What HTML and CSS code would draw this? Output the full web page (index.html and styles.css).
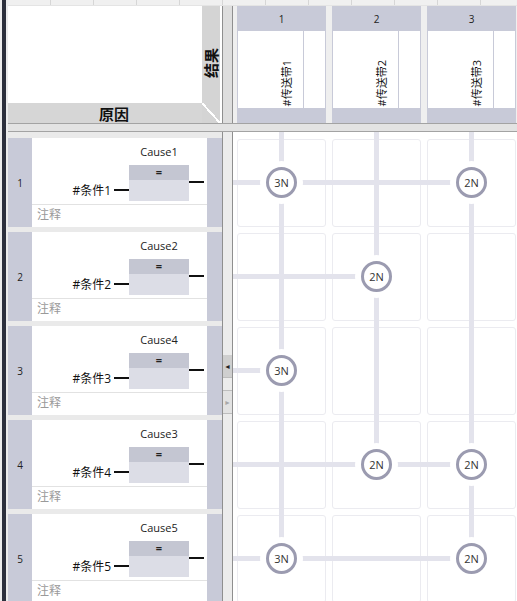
FILE: index.html
```html
<!DOCTYPE html>
<html lang="zh">
<head>
    <meta charset="UTF-8">
    <meta name="viewport" content="width=device-width, initial-scale=1.0">
    <title>因果矩阵</title>
    <link rel="stylesheet" href="styles.css">
</head>
<body>
    <div class="edge"></div>
    <div class="main">
        <div class="tabs">
            <span></span><span></span><span></span><span></span><span></span><span></span>
            <span></span><span></span><span></span><span></span><span></span><span></span>
        </div>

        <div class="corner">
            <div class="blank"></div>
            <div class="cause-title">原因</div>
            <div class="effect-title"><span>结果</span></div>
        </div>
        <div class="vsplit"></div>
        <div class="effects">
            <div class="effect">
                <div class="num">1</div>
                <div class="name"><div class="label"><span>#传送带1</span></div><i></i></div>
                <div class="foot"></div>
            </div>
            <div class="effect">
                <div class="num">2</div>
                <div class="name"><div class="label"><span>#传送带2</span></div><i></i></div>
                <div class="foot"></div>
            </div>
            <div class="effect">
                <div class="num">3</div>
                <div class="name"><div class="label"><span>#传送带3</span></div><i></i></div>
                <div class="foot"></div>
            </div>
        </div>

        <div class="hsplit"></div>

        <div class="causes">
            <div class="cause">
                <div class="num">1</div>
                <div class="body">
                    <div class="logic">
                        <div class="inp"><span>#条件1</span><b></b></div>
                        <div class="blk"><div class="tag">Cause1</div><div class="box"><div class="op">=</div><div class="pin"></div></div></div>
                        <b class="out"></b>
                    </div>
                    <div class="note">注释</div>
                </div>
                <div class="side"></div>
            </div>
            <div class="cause">
                <div class="num">2</div>
                <div class="body">
                    <div class="logic">
                        <div class="inp"><span>#条件2</span><b></b></div>
                        <div class="blk"><div class="tag">Cause2</div><div class="box"><div class="op">=</div><div class="pin"></div></div></div>
                        <b class="out"></b>
                    </div>
                    <div class="note">注释</div>
                </div>
                <div class="side"></div>
            </div>
            <div class="cause">
                <div class="num">3</div>
                <div class="body">
                    <div class="logic">
                        <div class="inp"><span>#条件3</span><b></b></div>
                        <div class="blk"><div class="tag">Cause4</div><div class="box"><div class="op">=</div><div class="pin"></div></div></div>
                        <b class="out"></b>
                    </div>
                    <div class="note">注释</div>
                </div>
                <div class="side"></div>
            </div>
            <div class="cause">
                <div class="num">4</div>
                <div class="body">
                    <div class="logic">
                        <div class="inp"><span>#条件4</span><b></b></div>
                        <div class="blk"><div class="tag">Cause3</div><div class="box"><div class="op">=</div><div class="pin"></div></div></div>
                        <b class="out"></b>
                    </div>
                    <div class="note">注释</div>
                </div>
                <div class="side"></div>
            </div>
            <div class="cause">
                <div class="num">5</div>
                <div class="body">
                    <div class="logic">
                        <div class="inp"><span>#条件5</span><b></b></div>
                        <div class="blk"><div class="tag">Cause5</div><div class="box"><div class="op">=</div><div class="pin"></div></div></div>
                        <b class="out"></b>
                    </div>
                    <div class="note">注释</div>
                </div>
                <div class="side"></div>
            </div>
        </div>

        <div class="vsplit low">
            <div class="arr">&#9668;</div>
            <div class="arr dim">&#9658;</div>
        </div>

        <div class="matrix">
            <div class="cells">
                <div class="cell"></div><div class="cell"></div><div class="cell"></div>
                <div class="cell"></div><div class="cell"></div><div class="cell"></div>
                <div class="cell"></div><div class="cell"></div><div class="cell"></div>
                <div class="cell"></div><div class="cell"></div><div class="cell"></div>
                <div class="cell"></div><div class="cell"></div><div class="cell"></div>
            </div>
            <svg class="wires" width="284" height="469" viewBox="0 0 284 469">
                <g class="wire">
                    <line x1="48.5" y1="0" x2="48.5" y2="426.5"/>
                    <line x1="143.5" y1="0" x2="143.5" y2="332.5"/>
                    <line x1="238.5" y1="0" x2="238.5" y2="426.5"/>
                    <line x1="0" y1="50.5" x2="238.5" y2="50.5"/>
                    <line x1="0" y1="144.5" x2="143.5" y2="144.5"/>
                    <line x1="0" y1="238.5" x2="48.5" y2="238.5"/>
                    <line x1="0" y1="332.5" x2="238.5" y2="332.5"/>
                    <line x1="0" y1="426.5" x2="238.5" y2="426.5"/>
                </g>
                <g class="node" transform="translate(48.5 50.5)"><circle class="halo" r="21.5"/><circle class="ring" r="14"/><text>3N</text></g>
                <g class="node" transform="translate(238.5 50.5)"><circle class="halo" r="21.5"/><circle class="ring" r="14"/><text>2N</text></g>
                <g class="node" transform="translate(143.5 144.5)"><circle class="halo" r="21.5"/><circle class="ring" r="14"/><text>2N</text></g>
                <g class="node" transform="translate(48.5 238.5)"><circle class="halo" r="21.5"/><circle class="ring" r="14"/><text>3N</text></g>
                <g class="node" transform="translate(143.5 332.5)"><circle class="halo" r="21.5"/><circle class="ring" r="14"/><text>2N</text></g>
                <g class="node" transform="translate(238.5 332.5)"><circle class="halo" r="21.5"/><circle class="ring" r="14"/><text>2N</text></g>
                <g class="node" transform="translate(48.5 426.5)"><circle class="halo" r="21.5"/><circle class="ring" r="14"/><text>3N</text></g>
                <g class="node" transform="translate(238.5 426.5)"><circle class="halo" r="21.5"/><circle class="ring" r="14"/><text>2N</text></g>
            </svg>
        </div>
    </div>
</body>
</html>
```

FILE: styles.css
```css
html, body {
    margin: 0;
    height: 100%;
}
body {
    display: flex;
    overflow: hidden;
    background-color: #ececec;
    font-family: "Open Sans", "Noto Sans CJK SC", sans-serif;
    color: #222;
}
.edge {
    flex: none;
    width: 4px;
    margin: 0 2px;
    background-color: #2c2f3c;
}
.main {
    display: grid;
    grid-template-columns: 214px 11px 284px;
    grid-template-rows: 6px 117px 9px 469px;
}

/* top strip */
.tabs {
    grid-column: 1 / -1;
    display: flex;
    overflow: hidden;
    background-color: #e4e4e4;
}
.tabs span {
    flex: none;
    width: 42px;
    margin-bottom: 1px;
    border-right: 1px solid #d6d6d6;
    background-color: #f0f0f0;
}

/* corner header */
.corner {
    display: grid;
    grid-template-columns: 194px 18px 2px;
    grid-template-rows: 97px 20px;
    background-color: #fff;
}
.cause-title {
    grid-row: 2;
    grid-column: 1 / 3;
    display: flex;
    align-items: center;
    justify-content: center;
    background-color: #d6d6d6;
    font-size: 15px;
    font-weight: bold;
    color: #111;
}
.effect-title {
    grid-row: 1 / 3;
    grid-column: 2;
    display: flex;
    align-items: center;
    justify-content: center;
    padding-bottom: 2px;
    background: linear-gradient(to top right, transparent calc(50% - 1px), #fff calc(50% - 1px), #fff calc(50% + 1px), transparent calc(50% + 1px)) left bottom / 18px 20px no-repeat, #d4d4d4;
}
.effect-title span {
    writing-mode: vertical-rl;
    text-orientation: sideways;
    transform: rotate(180deg);
    font-size: 15px;
    font-weight: bold;
    line-height: 1;
    color: #111;
}

/* splitters */
.vsplit {
    border-left: 1px solid #8f8f8f;
    border-right: 1px solid #8f8f8f;
    background-color: #dedede;
}
.vsplit.low {
    display: flex;
    flex-direction: column;
    padding-top: 223px;
    background-color: #ececec;
}
.arr {
    height: 22px;
    display: flex;
    align-items: center;
    justify-content: center;
    font-size: 7px;
    background-color: #cfcfcf;
    border-bottom: 1px solid #bdbdbd;
}
.arr.dim {
    margin-top: 12px;
    border-top: 1px solid #bdbdbd;
    background-color: #e2e2e2;
    color: #a8a8a8;
}
.hsplit {
    grid-column: 1 / -1;
    border-top: 1px solid #a3a3a3;
    border-bottom: 1px solid #a3a3a3;
    background-color: #e3e3e3;
}

/* effect columns */
.effects {
    display: flex;
    gap: 6px;
    padding-left: 4px;
    overflow: hidden;
    background-color: #efefef;
}
.effect {
    flex: none;
    width: 89px;
    display: flex;
    flex-direction: column;
    background-color: #c8cad8;
}
.effect .num {
    height: 25px;
    display: flex;
    align-items: center;
    justify-content: center;
    font-size: 10px;
}
.effect .name {
    flex: 1;
    display: flex;
    margin: 0 1px;
    background-color: #fff;
}
.effect .label {
    flex: 1;
    display: flex;
    justify-content: flex-end;
    align-items: flex-end;
    padding: 0 11px 2px 0;
}
.effect .label span {
    writing-mode: vertical-rl;
    text-orientation: sideways;
    transform: rotate(180deg);
    font-size: 11px;
    line-height: 1;
    color: #111;
}
.effect .name i {
    width: 21px;
    border-left: 1px solid #c8cad8;
}
.effect .foot {
    height: 15px;
}

/* cause rows */
.causes {
    display: flex;
    flex-direction: column;
    gap: 5px;
    padding-top: 6px;
    overflow: hidden;
    background-color: #eaeaea;
}
.cause {
    flex: none;
    height: 89px;
    display: flex;
    background-color: #c8cad8;
}
.cause .num {
    width: 24px;
    display: flex;
    align-items: center;
    justify-content: center;
    font-size: 10px;
}
.cause .body {
    width: 175px;
    display: flex;
    flex-direction: column;
    background-color: #fff;
}
.cause .side {
    width: 15px;
}
.logic {
    box-sizing: border-box;
    height: 67px;
    display: flex;
    justify-content: flex-end;
    padding-right: 3px;
    border-bottom: 1px solid #e2e2e2;
}
.inp {
    height: 14px;
    margin-top: 45px;
    display: flex;
    align-items: center;
    font-size: 12px;
    color: #111;
}
.inp b {
    width: 15px;
    height: 2px;
    margin-left: 3px;
    background-color: #111;
}
.blk {
    width: 60px;
    padding-top: 7px;
}
.tag {
    line-height: 14px;
    text-align: center;
    font-size: 11px;
    color: #222;
}
.box {
    margin-top: 6px;
}
.op {
    height: 15px;
    line-height: 13px;
    text-align: center;
    font-size: 11px;
    font-weight: bold;
    background-color: #c4c6d2;
}
.pin {
    height: 21px;
    background-color: #dcdde6;
}
.out {
    width: 15px;
    height: 2px;
    margin-top: 43px;
    background-color: #111;
}
.note {
    padding: 1px 0 0 5px;
    line-height: 18px;
    font-size: 12px;
    color: #9a9a9a;
}

/* matrix */
.matrix {
    position: relative;
    overflow: hidden;
    background-color: #fff;
}
.cells {
    display: grid;
    grid-template-columns: repeat(3, 89px);
    grid-auto-rows: 88px;
    gap: 6px;
    padding: 7px 0 0 4px;
}
.cell {
    border: 1px solid #ebebf0;
    border-radius: 3px;
}
.wires {
    position: absolute;
    left: 0;
    top: 0;
}
.wire line {
    stroke: #e3e3ec;
    stroke-width: 5;
}
.halo {
    fill: #fff;
}
.ring {
    fill: #fff;
    stroke: #9b9bb0;
    stroke-width: 3;
}
.node text {
    font-family: "Open Sans", sans-serif;
    font-size: 11px;
    fill: #333;
    text-anchor: middle;
    dominant-baseline: central;
}
```
